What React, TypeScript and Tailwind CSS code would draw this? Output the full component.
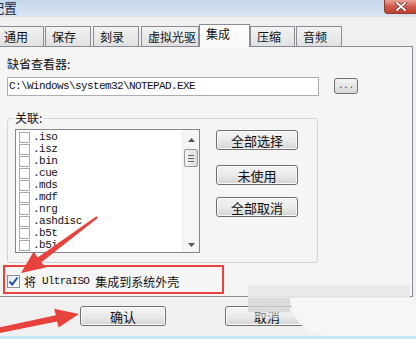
import React from "react";

const CJK = { fontFamily: '"Noto Sans CJK SC", "Noto Sans", sans-serif' };
const MONO = { fontFamily: '"Liberation Mono", "DejaVu Sans Mono", monospace' };

function WinButton({ label, className }: { label: string; className: string }) {
  return (
    <div
      className={`flex items-center justify-center border border-[#707070] rounded-[3px] bg-linear-to-b from-[#f4f4f4] via-[#ebebeb] to-[#d4d4d4] text-[13px] leading-none text-[#111] whitespace-nowrap shadow-[inset_0_0_0_1px_#fbfbfb] ${className}`}
      style={CJK}
    >
      {label}
    </div>
  );
}

function Tab({ label, className, selected }: { label: string; className: string; selected?: boolean }) {
  return (
    <div
      className={`flex items-center pl-[6px] text-[12px] leading-none text-[#111] whitespace-nowrap border border-b-0 border-[#898c95] ${
        selected
          ? "h-[23px] bg-[#fbfbfb] relative z-10 -mb-[1px] pb-[4px]"
          : "h-[20px] bg-linear-to-b from-[#f3f3f3] to-[#e1e1e1]"
      } ${className}`}
      style={CJK}
    >
      {label}
    </div>
  );
}

const items = [".iso", ".isz", ".bin", ".cue", ".mds", ".mdf", ".nrg", ".ashdisc", ".b5t", ".b5i", ".bwt"];

export default function App() {
  return (
    <div className="relative w-[416px] h-[339px] overflow-hidden bg-[#f0f0f0] flex flex-col" style={CJK}>
      {/* title bar */}
      <div className="h-[17px] flex items-start bg-linear-to-b from-[#c3d6ec] to-[#dbe6f3] shrink-0">
        <span className="ml-[-9px] mt-[1px] text-[13px] leading-[14px] text-[#1e2a3a] whitespace-nowrap">配置</span>
        <div className="ml-auto w-[32px] h-[14px] rounded-bl-[4px] border border-t-0 border-r-0 border-[#8e3a30] bg-linear-to-b from-[#e6a496] via-[#cf5a4c] to-[#c2402f] flex items-center justify-center">
          <svg width="12" height="9" viewBox="0 0 12 9">
            <path d="M2 1 L10 8 M10 1 L2 8" stroke="#6b2a22" strokeWidth="3.4" strokeLinecap="round" />
            <path d="M2 1 L10 8 M10 1 L2 8" stroke="#ffffff" strokeWidth="2" strokeLinecap="round" />
          </svg>
        </div>
      </div>

      {/* tab strip */}
      <div className="mt-[8px] h-[21px] flex items-end shrink-0">
        <Tab label="通用" className="ml-[-3px] w-[47px]" />
        <Tab label="保存" className="ml-[1px] w-[46px]" />
        <Tab label="刻录" className="ml-[2px] w-[46px]" />
        <Tab label="虚拟光驱" className="ml-[2px] w-[58px]" />
        <Tab label="集成" selected className="ml-0 w-[51px]" />
        <Tab label="压缩" className="ml-0 w-[45px]" />
        <Tab label="音频" className="ml-[1px] w-[46px]" />
      </div>

      {/* panel */}
      <div className="ml-[-1px] w-[414px] h-[251px] border border-[#898c95] bg-[#f5f5f5] flex flex-col shrink-0">
        <div className="mt-[10px] ml-[7px] text-[12px] leading-[14px] text-[#111]">缺省查看器:</div>
        <div className="mt-[6px] flex items-start">
          <div className="ml-[7px] w-[312px] h-[19px] bg-white border border-[#abadb3] flex items-center pl-[1px]">
            <span className="text-[11px] tracking-[-0.6px] text-[#111] leading-none" style={MONO}>
              C:\Windows\system32\NOTEPAD.EXE
            </span>
          </div>
          <div className="ml-[15px] mt-[1px] w-[24px] h-[16px] border border-[#707070] rounded-[3px] bg-linear-to-b from-[#f4f4f4] to-[#d8d8d8] flex items-end justify-center pb-[2px]">
            <span className="text-[9px] leading-none tracking-[0px] text-[#333]" style={MONO}>...</span>
          </div>
        </div>

        {/* group box */}
        <div className="relative mt-[22px] ml-[7px] w-[311px] h-[145px] border border-[#cfd6db] rounded-[3px] flex items-start">
          <span className="absolute left-[5px] top-[-8px] px-[2px] bg-[#f5f5f5] text-[12px] leading-[14px] text-[#111]">关联:</span>
          {/* listbox */}
          <div className="ml-[7px] mt-[10px] w-[185px] h-[124px] border border-[#828790] bg-white flex overflow-hidden">
            <div className="flex-1 flex flex-col pt-[1px] overflow-hidden">
              {items.map((it) => (
                <div key={it} className="h-[12px] flex items-center shrink-0">
                  <div className="ml-[3px] w-[11px] h-[11px] border border-[#a9a9a9] bg-white shrink-0" />
                  <span className="ml-[3px] text-[11px] tracking-[-0.5px] leading-none text-[#111]" style={MONO}>
                    {it}
                  </span>
                </div>
              ))}
            </div>
            <div className="w-[17px] h-full bg-[#f6f6f6] border-l border-[#ececec] flex flex-col items-center shrink-0">
              <svg className="mt-[8px]" width="7" height="4" viewBox="0 0 7 4">
                <path d="M0 4 L3.5 0 L7 4 Z" fill="#555" />
              </svg>
              <div className="mt-[7px] w-[14px] h-[18px] border border-[#9a9a9a] rounded-[2px] bg-linear-to-r from-[#f3f3f3] to-[#dcdcdc] flex flex-col items-center justify-center gap-[2px]">
                <div className="w-[6px] h-[1px] bg-[#666]" />
                <div className="w-[6px] h-[1px] bg-[#666]" />
                <div className="w-[6px] h-[1px] bg-[#666]" />
              </div>
              <svg className="mt-auto mb-[5px]" width="7" height="4" viewBox="0 0 7 4">
                <path d="M0 0 L7 0 L3.5 4 Z" fill="#555" />
              </svg>
            </div>
          </div>
          {/* buttons */}
          <div className="ml-[16px] mt-[11px] flex flex-col">
            <WinButton label="全部选择" className="w-[82px] h-[20px]" />
            <WinButton label="未使用" className="mt-[15px] w-[82px] h-[20px]" />
            <WinButton label="全部取消" className="mt-[12px] w-[82px] h-[20px]" />
          </div>
        </div>

        {/* integrate checkbox */}
        <div className="mt-[12px] ml-[7px] flex items-center h-[13px]">
          <div className="w-[13px] h-[13px] border border-[#8f8f8f] bg-linear-to-br from-[#dfe9f5] to-[#ffffff] flex items-center justify-center">
            <svg width="11" height="11" viewBox="0 0 11 11">
              <path d="M1.5 5.5 L4.3 8.5 L9.5 1.5" stroke="#1f4fa0" strokeWidth="2" fill="none" />
            </svg>
          </div>
          <span className="ml-[4px] text-[12px] leading-none text-[#111]">将</span>
          <span className="ml-[6px] text-[11px] tracking-[-0.7px] leading-none text-[#111]" style={MONO}>UltraISO</span>
          <span className="ml-[6px] text-[12px] leading-none text-[#111]">集成到系统外壳</span>
        </div>
      </div>

      {/* footer buttons */}
      <div className="mt-[9px] flex shrink-0">
        <WinButton label="确认" className="ml-[80px] w-[86px] h-[20px] text-[12px]" />
        <WinButton label="取消" className="ml-[59px] w-[84px] h-[20px] text-[12px]" />
      </div>

      <div className="mt-auto h-[3px] bg-[#c6e9f6] shrink-0" />

      {/* annotation: red box */}
      <div className="absolute left-[3px] top-[265px] w-[221px] h-[29px] border-2 border-[#e8423d]" />

      {/* watermark haze */}
      <div className="absolute left-[248px] top-[285px] w-[162px] h-[13px] bg-[#e9e9e9]/90" />
      <div className="absolute left-[248px] top-[298px] w-[42px] h-[14px] bg-[#d6d6d6]/80" />
      <div className="absolute left-[290px] top-[298px] w-[126px] h-[38px] bg-[#f6f6f6] rounded-bl-[40px]" />
      <div className="absolute left-[248px] top-[312px] w-[42px] h-[6px] bg-[#f0f0f0]/50" />

      {/* arrows */}
      <svg className="absolute left-0 top-0" width="416" height="339" viewBox="0 0 416 339">
        <polygon
          points="96.4,216.2 37.8,257.4 33.6,251.8 21,273 46,267.6 41.4,262.2 97.8,218"
          fill="#e8423d"
        />
        <polygon
          points="-1,327.5 55.8,315.2 54.2,308.8 79,314 58.6,327.6 57,321.6 0,333"
          fill="#e8423d"
        />
      </svg>
    </div>
  );
}
